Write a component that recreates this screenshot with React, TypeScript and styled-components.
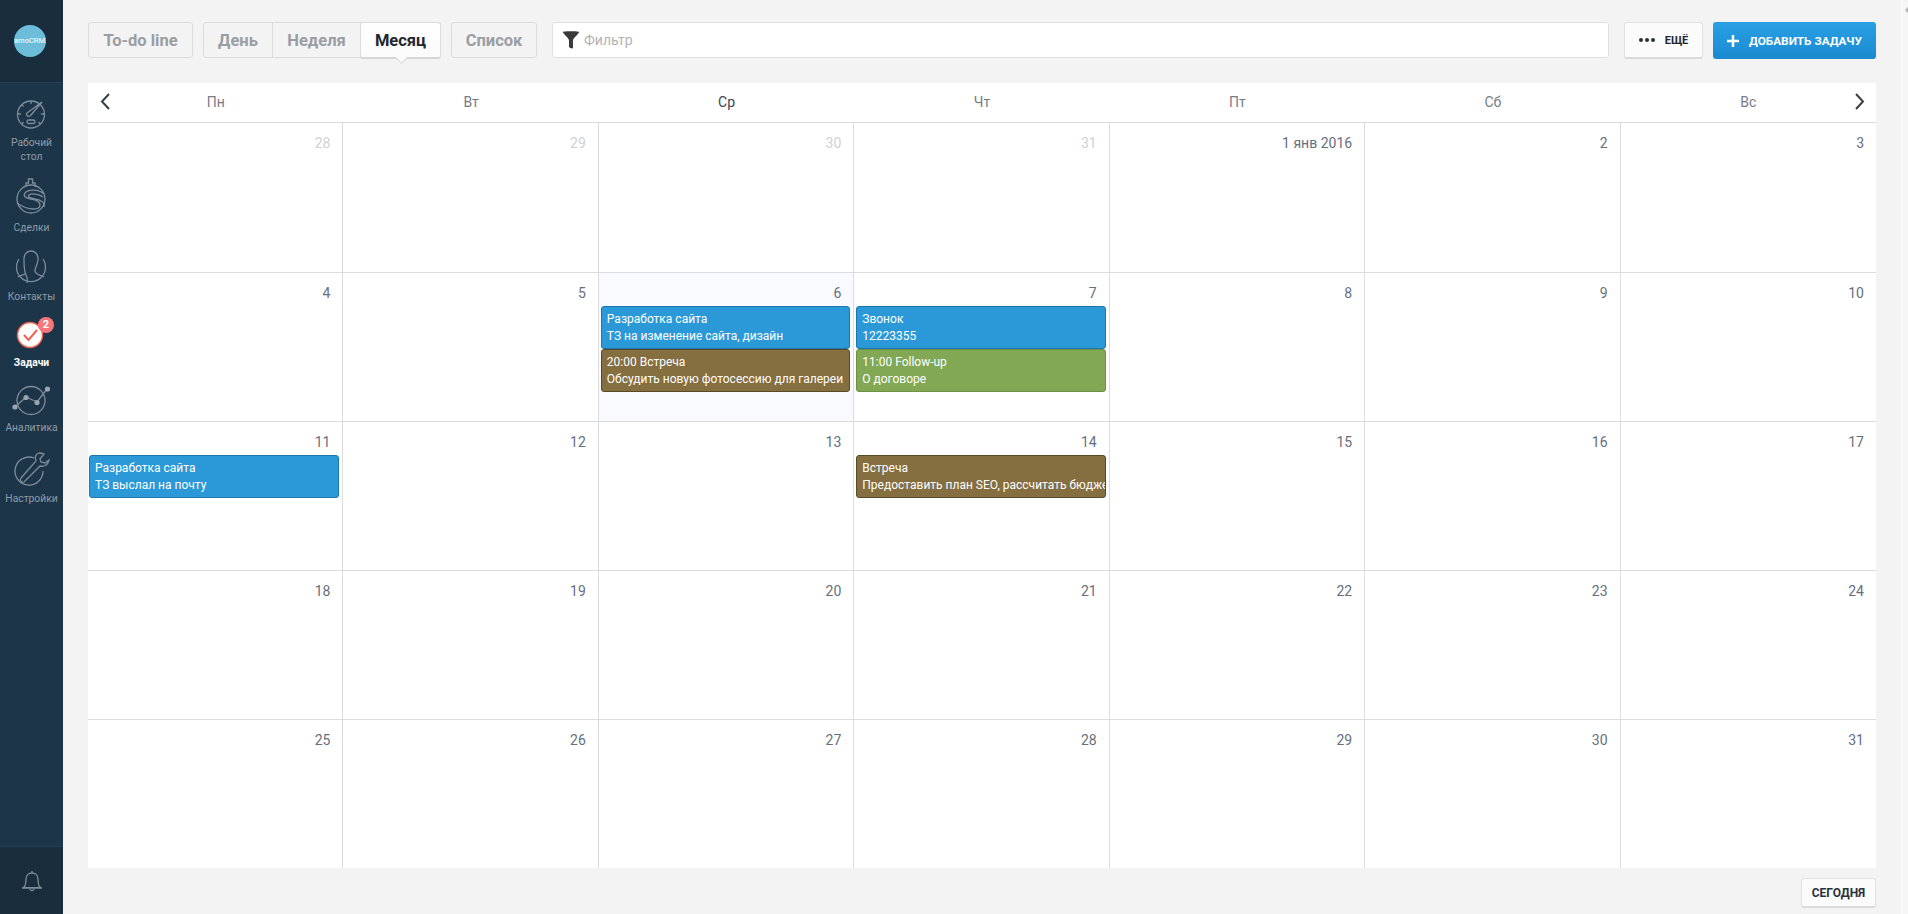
import React from "react";
import styled, { createGlobalStyle } from "styled-components";

const GlobalStyle = createGlobalStyle`
  html, body {
    margin: 0;
    padding: 0;
    height: 100%;
    overflow: hidden;
    background: #f3f3f3;
    font-family: Roboto, "Noto Sans", sans-serif;
  }
  * { box-sizing: border-box; }
`;

const Page = styled.div`
  display: flex;
  width: 1908px;
  height: 914px;
`;

// Left navigation
const Sidebar = styled.aside`
  width: 63px;
  flex-shrink: 0;
  display: flex;
  flex-direction: column;
  background: #1d3549;
`;

const LogoBar = styled.div`
  height: 83px;
  display: flex;
  align-items: center;
  padding-left: 14px;
  background: #192d3c;
  border-bottom: 1px solid #21405a;
`;

const Logo = styled.div`
  width: 32px;
  height: 32px;
  border-radius: 50%;
  background: #6cbdd9;
  color: #fff;
  font-size: 7.5px;
  line-height: 32px;
  text-align: center;
  white-space: nowrap;
  overflow: hidden;
`;

const Nav = styled.nav`
  flex: 1;
  display: flex;
  flex-direction: column;
  gap: 14px;
  padding-top: 13px;
`;

const NavItem = styled.a<{ $active?: boolean }>`
  position: relative;
  display: flex;
  flex-direction: column;
  align-items: center;
  color: ${(p) => (p.$active ? "#fff" : "#8f9ca6")};
  font-size: 10.3px;
  font-weight: ${(p) => (p.$active ? 700 : 400)};
  line-height: 14px;
  text-align: center;
`;

const NavIcon = styled.svg`
  display: block;
  width: 63px;
  flex-shrink: 0;
  fill: none;
  stroke: #7f8d98;
  stroke-width: 1.3;
`;

const Badge = styled.span`
  position: absolute;
  top: -1px;
  left: 38px;
  width: 16px;
  height: 16px;
  border-radius: 50%;
  background: #f8767b;
  color: #fff;
  font-size: 11px;
  font-weight: 700;
  line-height: 16px;
`;

const BellBar = styled.div`
  height: 68px;
  display: flex;
  align-items: center;
  justify-content: center;
  background: #192d3c;
  border-top: 1px solid #21405a;
`;

// Main column
const Main = styled.main`
  flex: 1;
  min-width: 0;
  display: flex;
  flex-direction: column;
  padding: 22px 25px 0 25px;
`;

const Toolbar = styled.div`
  display: flex;
  align-items: flex-start;
  height: 61px;
`;

const ToolButton = styled.button<{ $w: number }>`
  flex-shrink: 0;
  width: ${(p) => p.$w}px;
  height: 36px;
  padding: 0;
  border: 1px solid #dcdcdc;
  border-radius: 3px;
  background: #f3f3f3;
  color: #999ea3;
  font-family: inherit;
  font-size: 16.5px;
  font-weight: 700;
`;

const Tabs = styled.div`
  display: flex;
  flex-shrink: 0;
  height: 36px;
  margin: 0 10px;
  border: 1px solid #dcdcdc;
  border-radius: 3px;
`;

const Tab = styled.button<{ $active?: boolean; $w: number }>`
  position: relative;
  width: ${(p) => p.$w}px;
  padding: 0;
  border: 0;
  border-left: 1px solid #dcdcdc;
  background: transparent;
  color: #999ea3;
  font-family: inherit;
  font-size: 16.5px;
  font-weight: 700;
  &:first-child {
    border-left: 0;
  }
  ${(p) =>
    p.$active &&
    `
    height: 37px;
    margin: -1px -1px 0 0;
    background: linear-gradient(#fff, #fbfbfb);
    border: 1px solid #dcdcdc;
    border-bottom: 2px solid #d6d6d6;
    border-radius: 3px;
    color: #22262e;
    &::after {
      content: "";
      position: absolute;
      left: 50%;
      bottom: -5px;
      width: 8px;
      height: 8px;
      margin-left: -4px;
      background: #fbfbfb;
      border-right: 1px solid #d6d6d6;
      border-bottom: 1px solid #d6d6d6;
      transform: rotate(45deg);
    }
  `}
`;

const Filter = styled.div`
  flex: 1;
  height: 36px;
  margin: 0 15px;
  display: flex;
  align-items: center;
  gap: 5px;
  padding-left: 10px;
  background: #fff;
  border: 1px solid #e0e0e0;
  border-radius: 3px;
  color: #b3b3b3;
  font-size: 14px;
`;

const MoreButton = styled.button`
  flex-shrink: 0;
  width: 79px;
  height: 37px;
  display: flex;
  align-items: center;
  justify-content: center;
  gap: 10px;
  padding: 0;
  background: #fbfbfb;
  border: 1px solid #e2e2e2;
  border-bottom: 2px solid #dadada;
  border-radius: 3px;
  color: #22262e;
  font-family: inherit;
  font-size: 11px;
  font-weight: 700;
`;

const AddButton = styled.button`
  flex-shrink: 0;
  width: 163px;
  height: 37px;
  margin-left: 10px;
  display: flex;
  align-items: center;
  gap: 10px;
  padding: 0 0 0 14px;
  border: 0;
  border-radius: 3px;
  background: linear-gradient(#2aa0e5, #1a8acf);
  color: #fff;
  font-family: inherit;
  font-size: 11.8px;
  font-weight: 700;
  white-space: nowrap;
`;

// Month grid
const Calendar = styled.section`
  background: #fff;
`;

const WeekHeader = styled.div`
  position: relative;
  display: grid;
  grid-template-columns: repeat(7, 1fr);
  height: 40px;
  padding-bottom: 2px;
  align-items: center;
  text-align: center;
  border-bottom: 1px solid #dcdcdc;
  font-size: 14px;
`;

const WeekDay = styled.div<{ $today?: boolean }>`
  color: ${(p) => (p.$today ? "#3c4452" : "#757c88")};
`;

const Arrow = styled.svg<{ $side: "left" | "right" }>`
  position: absolute;
  top: 10px;
  ${(p) => p.$side}: ${(p) => (p.$side === "left" ? 12 : 11)}px;
  width: 10px;
  height: 17px;
  fill: none;
  stroke: #3a3f47;
  stroke-width: 2;
`;

const Grid = styled.div`
  display: grid;
  grid-template-columns: repeat(7, 1fr);
  grid-template-rows: 150px repeat(3, 149px) 148px;
`;

const Cell = styled.div<{ $today?: boolean }>`
  min-width: 0;
  padding: 10px 3px 0 2px;
  background: ${(p) => (p.$today ? "#f9faff" : "#fff")};
  border-right: 1px solid #dcdcdc;
  border-bottom: 1px solid #dcdcdc;
  &:nth-child(7n + 1) {
    padding-left: 1px;
  }
  &:nth-child(7n) {
    border-right: 0;
  }
  &:nth-last-child(-n + 7) {
    border-bottom: 0;
  }
`;

const DayNumber = styled.div<{ $muted?: boolean }>`
  height: 23px;
  padding-right: 9px;
  text-align: right;
  color: ${(p) => (p.$muted ? "#cfd1d4" : "#676f7e")};
  font-size: 14px;
  line-height: 20px;
`;

const palette = {
  blue: { bg: "#2b99d8", border: "#1a78ae" },
  brown: { bg: "#856e3f", border: "#5b4824" },
  green: { bg: "#82a855", border: "#6b9142" },
};

type EventColor = keyof typeof palette;

const EventCard = styled.div<{ $color: EventColor }>`
  height: 43px;
  padding: 4px 5px;
  overflow: hidden;
  white-space: nowrap;
  background: ${(p) => palette[p.$color].bg};
  border: 1px solid ${(p) => palette[p.$color].border};
  border-radius: 3px;
  color: #fff;
  font-size: 12px;
  line-height: 17px;
`;

const Footer = styled.div`
  display: flex;
  justify-content: flex-end;
  padding-top: 10px;
`;

const TodayButton = styled.button`
  width: 75px;
  height: 30px;
  padding: 0;
  background: #fbfbfb;
  border: 1px solid #e2e2e2;
  border-bottom: 2px solid #dadada;
  border-radius: 3px;
  color: #2b3140;
  font-family: inherit;
  font-size: 12px;
  font-weight: 700;
`;

// Page scrollbar strip with its top arrow
const ScrollTrack = styled.div`
  position: relative;
  width: 7px;
  flex-shrink: 0;
  background: #f5f5f5;
  border-left: 1px solid #fff;
  &::before {
    content: "";
    position: absolute;
    top: 7px;
    right: 0;
    border-right: 3px solid #b5b5b5;
    border-top: 3px solid transparent;
    border-bottom: 3px solid transparent;
  }
`;

interface CalEvent {
  title: string;
  text: string;
  color: EventColor;
}

interface Day {
  label: string;
  muted?: boolean;
  today?: boolean;
  events?: CalEvent[];
}

const weekDays = ["Пн", "Вт", "Ср", "Чт", "Пт", "Сб", "Вс"];

const eventsByDay: Record<number, CalEvent[]> = {
  6: [
    { title: "Разработка сайта", text: "ТЗ на изменение сайта, дизайн", color: "blue" },
    { title: "20:00 Встреча", text: "Обсудить новую фотосессию для галереи", color: "brown" },
  ],
  7: [
    { title: "Звонок", text: "12223355", color: "blue" },
    { title: "11:00 Follow-up", text: "О договоре", color: "green" },
  ],
  11: [{ title: "Разработка сайта", text: "ТЗ выслал на почту", color: "blue" }],
  14: [{ title: "Встреча", text: "Предоставить план SEO, рассчитать бюджет", color: "brown" }],
};

const days: Day[] = [
  ...[28, 29, 30, 31].map((n) => ({ label: String(n), muted: true })),
  { label: "1 янв 2016" },
  ...Array.from({ length: 30 }, (_, i) => i + 2).map((n) => ({
    label: String(n),
    today: n === 6,
    events: eventsByDay[n],
  })),
];

const App: React.FC = () => (
  <Page>
    <GlobalStyle />
    <Sidebar>
      <LogoBar>
        <Logo>amoCRM.</Logo>
      </LogoBar>
      <Nav>
        <NavItem>
          <NavIcon height="40" viewBox="0 96 63 40">
            <circle cx="31" cy="114.5" r="13.5" />
            <path d="M42 102l-11 13c-2 3-6 0-4-2l15-11zM31 101v3M18 114h3M41 114h3M21.500 104.500l2 2M21.500 124l2-2M40.500 124l-2-2" />
            <rect x="27" y="120" width="8" height="3.500" rx="1.700" />
          </NavIcon>
          <span>Рабочий<br />стол</span>
        </NavItem>
        <NavItem>
          <NavIcon height="43" viewBox="0 178 63 43">
            <circle cx="31" cy="199" r="14" />
            <path d="M26 186v-3h2.500v-4h4v4H35v4" />
            <path d="M44 194c-5-5-16-5-19-1-2 3 0 5 6 6 6 1 9 3 9 6 0 2-2 4-6 4-6 0-13-3-17-6" />
            <path d="M43 197c-4-3-12-4-14-2-2 2 1 3 6 4 7 1 10 4 9 8" />
          </NavIcon>
          <span>Сделки</span>
        </NavItem>
        <NavItem>
          <NavIcon height="41" viewBox="0 249 63 41">
            <path d="M19 259a14.500 14.500 0 1 0 24 0" />
            <path d="M24 260c-1-12 15-12 14 0-1 6-3 7-3 11 0 3 5 4 9 6M27 283c1-4 0-5-1-8-1-2-2-7-2-15M18 277c3-2 7-2 8-4" />
          </NavIcon>
          <span>Контакты</span>
        </NavItem>
        <NavItem $active>
          <NavIcon height="38" viewBox="0 318 63 38">
            <circle cx="30" cy="335" r="12.500" fill="#fff" stroke="#f0614f" strokeWidth="1.500" />
            <path d="M24 335l4.500 5L37 330" stroke="#f0614f" strokeWidth="2" />
          </NavIcon>
          <Badge>2</Badge>
          <span>Задачи</span>
        </NavItem>
        <NavItem>
          <NavIcon height="37" viewBox="0 384 63 37">
            <circle cx="31" cy="400.500" r="14" />
            <path d="M15 407l11-10 11 5 10-13" />
            <g fill="#9aa5ae" stroke="none">
              <circle cx="15" cy="407" r="2.600" />
              <circle cx="26" cy="397.500" r="2.600" />
              <circle cx="37" cy="402.500" r="2.600" />
              <circle cx="47.500" cy="389" r="2.600" />
            </g>
          </NavIcon>
          <span>Аналитика</span>
        </NavItem>
        <NavItem>
          <NavIcon height="43" viewBox="0 449 63 43">
            <path d="M34 458a14 14 0 1 0 9 13" />
            <path d="M39 453c-3 1-5 4-3 8l-15 17c-2 3 1 5 3 4l16-16c4 1 8-1 9-6l-4 3-4-1-1-3 4-5c-2-1-3-1-5-1z" />
          </NavIcon>
          <span>Настройки</span>
        </NavItem>
      </Nav>
      <BellBar>
        <svg width="22" height="22" viewBox="0 0 22 22" fill="none" stroke="#7f8d98" strokeWidth="1.300">
          <path d="M3 17c2-2 2-4 2-8 0-4 3-6 6-6s6 2 6 6c0 4 0 6 2 8-1 1-15 1-16 0zM1 18h20M9 19c0 2 4 2 4 0M11 1v2" />
        </svg>
      </BellBar>
    </Sidebar>

    <Main>
      <Toolbar>
        <ToolButton $w={105}>To-do line</ToolButton>
        <Tabs>
          <Tab $w={68}>День</Tab>
          <Tab $w={88}>Неделя</Tab>
          <Tab $w={81} $active>Месяц</Tab>
        </Tabs>
        <ToolButton $w={86}>Список</ToolButton>
        <Filter>
          <svg width="16" height="18" viewBox="0 0 16 18" fill="#3a3a3a">
            <path d="M0 1c0-1 16-1 16 0 0 2-5 5-6 8v8c-1 1-3 0-4-1V9C5 6 0 3 0 1z" />
          </svg>
          Фильтр
        </Filter>
        <MoreButton>
          <svg width="16" height="4" viewBox="0 0 16 4" fill="#2b3140">
            <circle cx="2" cy="2" r="2" />
            <circle cx="8" cy="2" r="2" />
            <circle cx="14" cy="2" r="2" />
          </svg>
          ЕЩЁ
        </MoreButton>
        <AddButton>
          <svg width="12" height="12" viewBox="0 0 12 12" fill="#fff">
            <path d="M4.750 0h2.500v4.750H12v2.500H7.250V12h-2.500V7.250H0v-2.500h4.750z" />
          </svg>
          ДОБАВИТЬ ЗАДАЧУ
        </AddButton>
      </Toolbar>

      <Calendar>
        <WeekHeader>
          <Arrow $side="left" viewBox="0 0 10 17">
            <path d="M9 1L2 8.500 9 16" />
          </Arrow>
          {weekDays.map((d) => (
            <WeekDay key={d} $today={d === "Ср"}>{d}</WeekDay>
          ))}
          <Arrow $side="right" viewBox="0 0 10 17">
            <path d="M1 1l7 7.500L1 16" />
          </Arrow>
        </WeekHeader>
        <Grid>
          {days.map((day, i) => (
            <Cell key={i} $today={day.today}>
              <DayNumber $muted={day.muted}>{day.label}</DayNumber>
              {day.events?.map((ev) => (
                <EventCard key={ev.title} $color={ev.color}>
                  {ev.title}
                  <br />
                  {ev.text}
                </EventCard>
              ))}
            </Cell>
          ))}
        </Grid>
      </Calendar>

      <Footer>
        <TodayButton>СЕГОДНЯ</TodayButton>
      </Footer>
    </Main>
    <ScrollTrack />
  </Page>
);

export default App;
